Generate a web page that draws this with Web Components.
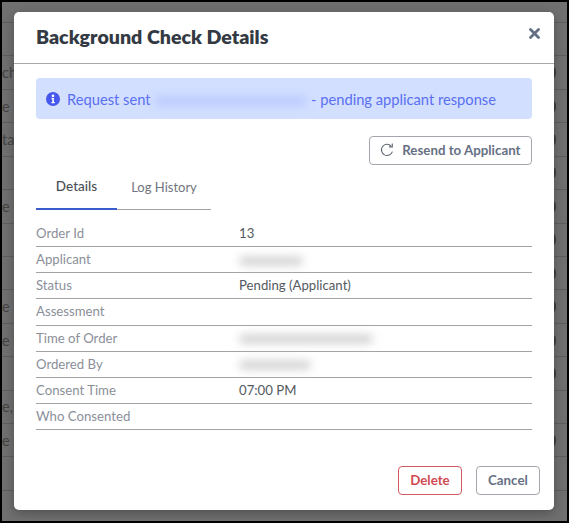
<!DOCTYPE html>
<html lang="en">
<head>
<meta charset="utf-8">
<title>Background Check Details</title>
<style>
  html, body { margin: 0; height: 100%; background: #000; }
  body { font-family: "Lato", "Open Sans", sans-serif; overflow: hidden; }
</style>
</head>
<body>
<app-screen>
  <back-rows></back-rows>
  <check-modal heading="Background Check Details">
    <info-alert>Request sent <blur-bar width="153" tone="blue"></blur-bar> - pending applicant response</info-alert>
    <div style="display:flex;justify-content:flex-end;margin-top:17px">
      <app-button kind="icon">Resend to Applicant</app-button>
    </div>
    <tab-bar></tab-bar>
    <detail-table>
      <detail-row label="Order Id">13</detail-row>
      <detail-row label="Applicant"><blur-bar width="64" tone="gray"></blur-bar></detail-row>
      <detail-row label="Status">Pending (Applicant)</detail-row>
      <detail-row label="Assessment"></detail-row>
      <detail-row label="Time of Order"><blur-bar width="134" tone="gray"></blur-bar></detail-row>
      <detail-row label="Ordered By"><blur-bar width="72" tone="gray"></blur-bar></detail-row>
      <detail-row label="Consent Time">07:00 PM</detail-row>
      <detail-row label="Who Consented"></detail-row>
    </detail-table>
    <app-button slot="footer" kind="danger">Delete</app-button>
    <app-button slot="footer" kind="plain">Cancel</app-button>
  </check-modal>
</app-screen>

<script>
(function () {
  'use strict';

  class AppScreen extends HTMLElement {
    constructor() {
      super();
      this.attachShadow({ mode: 'open' });
      this.shadowRoot.innerHTML = `
        <style>
          :host {
            display: block;
            position: relative;
            width: 565px;
            height: 519px;
            margin: 2px;
            overflow: hidden;
            background: #707070;
          }
        </style>
        <slot></slot>
      `;
    }
  }

  // the page behind the dialog, dimmed: only the row ends show past the modal
  class BackRows extends HTMLElement {
    constructor() {
      super();
      this.attachShadow({ mode: 'open' });
      const ends = ['', 'ch', 'e', 'tag', '', 'e', '', '', 'e', 'e', '', 'e,', 'e', '', ''];
      const dotted = [1, 2, 3, 4, 5, 6, 7, 8, 9, 10, 12];
      let rows = '';
      ends.forEach((txt, i) => {
        rows += `<div class="row"><span class="end">${txt}</span>${dotted.includes(i) ? '<i class="dot"></i>' : ''}</div>`;
      });
      this.shadowRoot.innerHTML = `
        <style>
          :host {
            display: block;
            margin-top: 20px;
            color: #444;
            font: 14.5px "Lato", sans-serif;
          }
          .row {
            height: 33.43px;
            box-sizing: border-box;
            border-top: 1px solid #5f5f5f;
            display: flex;
            align-items: center;
            justify-content: space-between;
          }
          .end { width: 40px; white-space: nowrap; }
          .dot {
            width: 5px;
            height: 11px;
            margin-right: 11px;
            border-radius: 50%;
            background: #3e3e3e;
          }
        </style>
        ${rows}
      `;
    }
  }

  class CheckModal extends HTMLElement {
    constructor() {
      super();
      this.attachShadow({ mode: 'open' });
      this.shadowRoot.innerHTML = `
        <style>
          :host {
            display: flex;
            flex-direction: column;
            position: absolute;
            left: 12px;
            top: 10px;
            width: 540px;
            height: 498px;
            box-sizing: border-box;
            background: #fff;
            border-radius: 5px;
            box-shadow: 0 3px 12px rgba(0,0,0,.3);
          }
          .head {
            height: 52px;
            box-sizing: border-box;
            border-bottom: 1px solid #a9a9a9;
            padding: 13px 14px 0 22px;
            display: flex;
            justify-content: space-between;
            align-items: flex-start;
          }
          h2 {
            margin: 0;
            font-size: 19.6px;
            line-height: 24px;
            font-weight: 800;
            color: #343a43;
          }
          .close { width: 11px; height: 11px; margin-top: 3px; }
          .body { padding: 14px 22px 0; flex: 1; }
          .foot {
            display: flex;
            justify-content: flex-end;
            gap: 14px;
            padding: 0 14px 15px;
          }
        </style>
        <div class="head">
          <h2></h2>
          <svg class="close" viewBox="0 0 11 11"><path d="M1.5 1.5l8 8M9.5 1.5l-8 8" stroke="#667085" stroke-width="2.8" stroke-linecap="round"/></svg>
        </div>
        <div class="body"><slot></slot></div>
        <div class="foot"><slot name="footer"></slot></div>
      `;
    }

    connectedCallback() {
      this.shadowRoot.querySelector('h2').textContent = this.getAttribute('heading') || '';
    }
  }

  class InfoAlert extends HTMLElement {
    constructor() {
      super();
      this.attachShadow({ mode: 'open' });
      this.shadowRoot.innerHTML = `
        <style>
          :host {
            display: flex;
            align-items: center;
            height: 41px;
            padding-left: 10px;
            background: #d2dfff;
            border-radius: 4px;
            color: #5a6ff2;
            font-size: 14.7px;
            white-space: pre;
          }
          svg { width: 14px; height: 14px; margin-right: 7px; flex: none; }
          .txt { display: block; }
        </style>
        <svg viewBox="0 0 14 14">
          <circle cx="7" cy="7" r="7" fill="#4557ee"/>
          <circle cx="7" cy="3.9" r="1.3" fill="#fff"/>
          <path d="M5.5 6h2.4v4h.9v1.2H5.4V10h.9V7.2h-.8z" fill="#fff"/>
        </svg>
        <span class="txt"><slot></slot></span>
      `;
    }
  }

  // stands in for the redacted values of the reference, which are blurred out
  class BlurBar extends HTMLElement {
    constructor() {
      super();
      this.attachShadow({ mode: 'open' });
      this.shadowRoot.innerHTML = `
        <style>
          :host {
            display: inline-block;
            vertical-align: middle;
            height: 10px;
            border-radius: 5px;
            filter: blur(4px);
          }
          :host([tone="blue"]) { background: #bccbff; }
          :host([tone="gray"]) { background: #d6d6d6; }
        </style>
      `;
    }

    connectedCallback() {
      this.style.width = (this.getAttribute('width') || 60) + 'px';
    }
  }

  class AppButton extends HTMLElement {
    constructor() {
      super();
      this.attachShadow({ mode: 'open' });
      this.shadowRoot.innerHTML = `
        <style>
          :host {
            display: inline-flex;
            align-items: center;
            justify-content: center;
            height: 29px;
            box-sizing: border-box;
            padding: 0 10.5px 1px;
            border: 1px solid #a3a6ad;
            border-radius: 4px;
            background: #fff;
            color: #667085;
            font-size: 13.3px;
            font-weight: 700;
          }
          :host([kind="danger"]), :host([kind="plain"]) { padding: 0 11.2px 1px; }
          :host([kind="danger"]) { border-color: #cf5a5f; color: #cf4a50; }
          svg { width: 14px; height: 14px; margin-right: 8px; }
        </style>
        <slot name="icon"></slot><slot></slot>
      `;
    }

    connectedCallback() {
      if (this.getAttribute('kind') === 'icon') {
        const tpl = document.createElement('template');
        tpl.innerHTML = `<svg viewBox="0 0 14 14" fill="none" stroke="#5f6673" stroke-width="1.1"><path d="M12.4 8.6A5.6 5.6 0 1 1 11.1 3"/><path d="M12.3 .6v3.3H9"/></svg>`;
        this.shadowRoot.insertBefore(tpl.content, this.shadowRoot.querySelector('slot'));
      }
    }
  }

  class TabBar extends HTMLElement {
    constructor() {
      super();
      this.attachShadow({ mode: 'open' });
      this.shadowRoot.innerHTML = `
        <style>
          :host {
            display: flex;
            width: 175px;
            height: 45px;
            box-sizing: border-box;
            border-bottom: 1px solid #a3a3a3;
          }
          .tab {
            display: flex;
            align-items: center;
            justify-content: center;
            height: 45px;
            box-sizing: border-box;
            padding-bottom: 1px;
          }
          .on { width: 81px; color: #4a4f59; font-size: 13.5px; font-weight: 500; border-bottom: 2px solid #3a5ccc; }
          .off { flex: 1; color: #71757d; font-size: 13px; }
        </style>
        <div class="tab on">Details</div>
        <div class="tab off">Log History</div>
      `;
    }
  }

  class DetailTable extends HTMLElement {
    constructor() {
      super();
      this.attachShadow({ mode: 'open' });
      this.shadowRoot.innerHTML = `
        <style>
          :host { display: block; margin-top: 11px; }
        </style>
        <slot></slot>
      `;
    }
  }

  class DetailRow extends HTMLElement {
    constructor() {
      super();
      this.attachShadow({ mode: 'open' });
      this.shadowRoot.innerHTML = `
        <style>
          :host {
            display: grid;
            grid-template-columns: 203px 1fr;
            align-items: center;
            height: 26.15px;
            box-sizing: border-box;
            border-bottom: 1px solid #a3a3a3;
            padding-bottom: 1px;
            font-size: 13.2px;
          }
          .label { color: #8b8f99; }
          .value { color: #555a62; }
        </style>
        <div class="label"></div>
        <div class="value"><slot></slot></div>
      `;
    }

    connectedCallback() {
      this.shadowRoot.querySelector('.label').textContent = this.getAttribute('label');
    }
  }

  customElements.define('app-screen', AppScreen);
  customElements.define('back-rows', BackRows);
  customElements.define('check-modal', CheckModal);
  customElements.define('info-alert', InfoAlert);
  customElements.define('blur-bar', BlurBar);
  customElements.define('app-button', AppButton);
  customElements.define('tab-bar', TabBar);
  customElements.define('detail-table', DetailTable);
  customElements.define('detail-row', DetailRow);
})();
</script>
</body>
</html>
